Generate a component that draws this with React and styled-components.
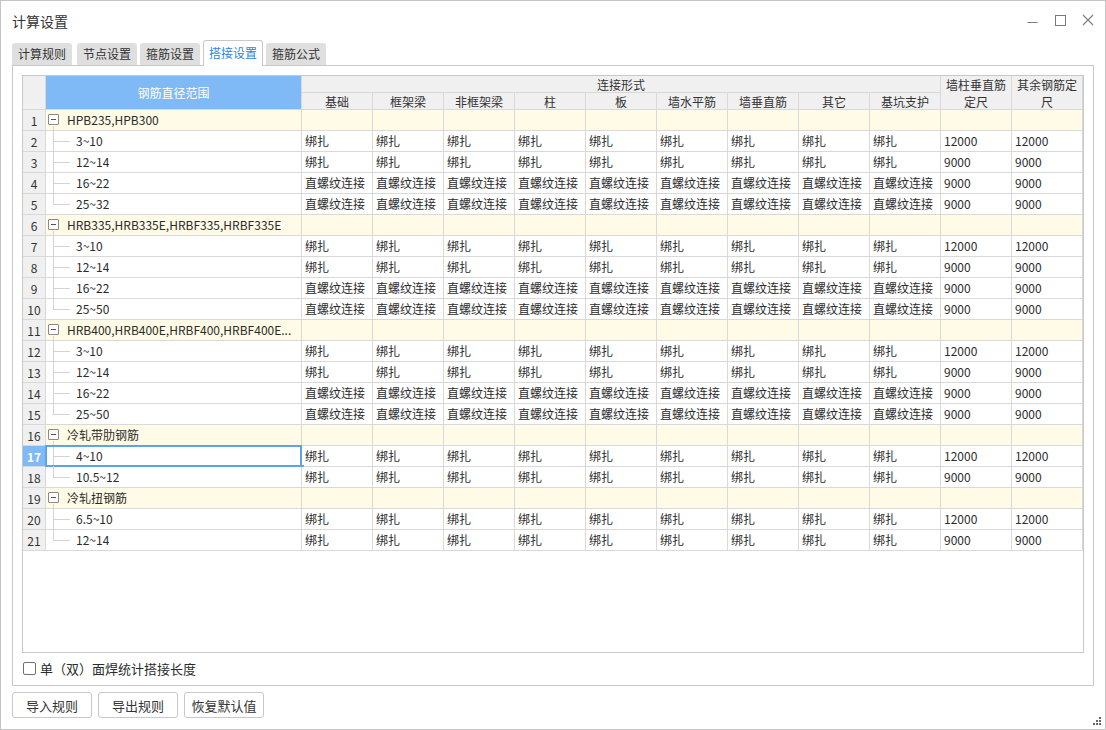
import React, { useState } from 'react';
import styled, { createGlobalStyle, css } from 'styled-components';

const GlobalStyle = createGlobalStyle`
    * {
        box-sizing: border-box;
    }
    body {
        margin: 0;
        background: #ffffff;
        font-family: 'Noto Sans CJK SC', 'Microsoft YaHei', sans-serif;
        color: #2b2b2b;
    }
`;

const LINE = '#d9d9d9';
const BLUE = '#7fb9f6';

const Window = styled.div`
    position: relative;
    width: 1106px;
    height: 730px;
    border: 1px solid #c4c4c4;
    background: #fff;
    display: flex;
    flex-direction: column;
`;

const TitleBar = styled.div`
    height: 39px;
    display: flex;
    align-items: center;
    padding: 0 3px 0 11px;
`;

const Title = styled.div`
    font-size: 14px;
    line-height: 18px;
    color: #333;
`;

const Controls = styled.div`
    margin-left: auto;
    display: flex;
    align-self: stretch;
`;

const ControlButton = styled.div`
    width: 28px;
    display: flex;
    align-items: center;
    justify-content: center;
    padding-bottom: 1px;
`;

const TabBar = styled.div`
    height: 25px;
    display: flex;
    align-items: flex-end;
    gap: 3px;
    padding-left: 11px;
    position: relative;
    z-index: 1;
`;

const Tab = styled.div`
    width: 60px;
    height: 22px;
    display: flex;
    align-items: center;
    justify-content: center;
    font-size: 12px;
    line-height: 16px;
    color: #333;
    background: #dfdfdf;
    border-radius: 3px 3px 0 0;
    &:first-child {
        margin-right: 2px;
    }
    ${(p) =>
        p.active &&
        css`
            height: 26px;
            margin-bottom: -1px;
            background: #fff;
            color: #2a86e0;
            border: 1px solid #c8c8c8;
            border-bottom: none;
            padding-bottom: 2px;
        `}
`;

const Panel = styled.div`
    margin: 0 11px;
    height: 621px;
    border: 1px solid #c8c8c8;
    padding: 9px 8px 0 9px;
    display: flex;
    flex-direction: column;
`;

const Grid = styled.div`
    width: 1062px;
    height: 578px;
    border: 1px solid #c8c8c8;
    overflow: hidden;
    background: #fff;
`;

const HeaderGrid = styled.div`
    display: grid;
    grid-template-columns: 23px 256px repeat(11, 71px);
    grid-template-rows: 17px 17px;
    background: #f0f0f0;
`;

const HeadCell = styled.div`
    display: flex;
    align-items: center;
    justify-content: center;
    text-align: center;
    font-size: 12px;
    line-height: 17px;
    color: #333;
    padding: 0 2px;
    border-right: 1px solid ${LINE};
    border-bottom: 1px solid ${LINE};
    grid-column: ${(p) => p.col || 'auto'};
    grid-row: ${(p) => p.row || 'auto'};
    background: ${(p) => (p.blue ? BLUE : '#f0f0f0')};
    color: ${(p) => (p.blue ? '#fff' : '#333')};
`;

const Row = styled.div`
    position: relative;
    display: grid;
    grid-template-columns: 23px 256px repeat(11, 71px);
    height: 21px;
    background: ${(p) => (p.group ? '#fffbe6' : '#fff')};
`;

const NumCell = styled.div`
    display: flex;
    align-items: center;
    justify-content: center;
    font-size: 12px;
    background: ${(p) => (p.selected ? BLUE : '#f0f0f0')};
    color: ${(p) => (p.selected ? '#fff' : '#333')};
    font-weight: ${(p) => (p.selected ? 700 : 400)};
    border-right: 1px solid ${LINE};
    border-bottom: 1px solid ${LINE};
`;

const Cell = styled.div`
    font-size: 12px;
    line-height: 20px;
    padding: 0 3px;
    white-space: nowrap;
    overflow: hidden;
    border-right: 1px solid ${LINE};
    border-bottom: 1px solid ${LINE};
`;

const NameCell = styled.div`
    position: relative;
    display: flex;
    align-items: center;
    font-size: 12px;
    line-height: 20px;
    padding-left: ${(p) => (p.child ? '30px' : '2px')};
    border-right: 1px solid ${LINE};
    border-bottom: 1px solid ${LINE};
`;

const NameText = styled.span`
    white-space: nowrap;
    overflow: hidden;
    text-overflow: ellipsis;
    max-width: 228px;
`;

const Toggle = styled.span`
    width: 11px;
    height: 11px;
    border: 1px solid #8a8a8a;
    border-radius: 1px;
    margin-right: 8px;
    margin-top: -1px;
    display: flex;
    align-items: center;
    justify-content: center;
    background: #fff;
    &::after {
        content: '';
        width: 5px;
        height: 1px;
        background: #555;
    }
`;

const TreeV = styled.span`
    position: absolute;
    left: 7px;
    width: 1px;
    background: #d4d4d4;
    top: ${(p) => p.top}px;
    bottom: ${(p) => p.bottom}px;
`;

const TreeH = styled.span`
    position: absolute;
    left: 7px;
    top: 10px;
    width: 17px;
    height: 1px;
    background: #d4d4d4;
`;

const Selection = styled.div`
    position: absolute;
    left: 22px;
    top: -1px;
    width: 257px;
    height: 22px;
    border: 2px solid #5fa2ec;
    pointer-events: none;
    &::after {
        content: '';
        position: absolute;
        right: -4px;
        bottom: -4px;
        width: 4px;
        height: 4px;
        background: #5fa2ec;
    }
`;

const CheckRow = styled.label`
    flex: 1;
    display: flex;
    align-items: center;
    padding-left: 1px;
    font-size: 13px;
    line-height: 18px;
    color: #2b2b2b;
    padding-bottom: 1px;
`;

const CheckBox = styled.span`
    width: 13px;
    height: 13px;
    border: 1px solid #6f6f6f;
    border-radius: 2px;
    background: #fff;
    margin-right: 4px;
`;

const ButtonRow = styled.div`
    display: flex;
    gap: 6px;
    padding: 6px 0 0 11px;
`;

const Button = styled.button`
    width: 80px;
    height: 26px;
    border: 1px solid #c8c8c8;
    border-radius: 3px;
    background: #fff;
    font-family: inherit;
    font-size: 13px;
    color: #333;
    padding: 0;
`;

const Grip = styled.svg`
    position: absolute;
    right: 3px;
    bottom: 3px;
`;

const COLS = ['基础', '框架梁', '非框架梁', '柱', '板', '墙水平筋', '墙垂直筋', '其它', '基坑支护'];

const small = (r) => [r, '绑扎', 12000];
const groups = [
    {
        name: 'HPB235,HPB300',
        items: [
            ['3~10', '绑扎', 12000],
            ['12~14', '绑扎', 9000],
            ['16~22', '直螺纹连接', 9000],
            ['25~32', '直螺纹连接', 9000],
        ],
    },
    {
        name: 'HRB335,HRB335E,HRBF335,HRBF335E',
        items: [
            ['3~10', '绑扎', 12000],
            ['12~14', '绑扎', 9000],
            ['16~22', '直螺纹连接', 9000],
            ['25~50', '直螺纹连接', 9000],
        ],
    },
    {
        name: 'HRB400,HRB400E,HRBF400,HRBF400E...',
        items: [
            ['3~10', '绑扎', 12000],
            ['12~14', '绑扎', 9000],
            ['16~22', '直螺纹连接', 9000],
            ['25~50', '直螺纹连接', 9000],
        ],
    },
    {
        name: '冷轧带肋钢筋',
        items: [small('4~10'), ['10.5~12', '绑扎', 9000]],
    },
    {
        name: '冷轧扭钢筋',
        items: [small('6.5~10'), ['12~14', '绑扎', 9000]],
    },
];

const buildRows = () => {
    const rows = [];
    groups.forEach((g) => {
        rows.push({ type: 'group', name: g.name });
        g.items.forEach((it, i) => {
            rows.push({ type: 'item', range: it[0], mode: it[1], len: it[2], last: i === g.items.length - 1 });
        });
    });
    return rows;
};

const TABS = ['计算规则', '节点设置', '箍筋设置', '搭接设置', '箍筋公式'];

const App = () => {
    const [selected, setSelected] = useState(17);
    const [checked, setChecked] = useState(false);
    const rows = buildRows();

    return (
        <>
            <GlobalStyle />
            <Window>
                <TitleBar>
                    <Title>计算设置</Title>
                    <Controls>
                        <ControlButton>
                            <svg width="11" height="11" viewBox="0 0 11 11">
                                <line x1="0.5" y1="7.5" x2="10.5" y2="7.5" stroke="#7a7a7a" />
                            </svg>
                        </ControlButton>
                        <ControlButton>
                            <svg width="11" height="11" viewBox="0 0 11 11">
                                <rect x="0.5" y="0.5" width="10" height="10" fill="none" stroke="#7a7a7a" />
                            </svg>
                        </ControlButton>
                        <ControlButton>
                            <svg width="12" height="12" viewBox="0 0 12 12">
                                <path d="M1 1L11 11M11 1L1 11" stroke="#7a7a7a" strokeWidth="1.1" />
                            </svg>
                        </ControlButton>
                    </Controls>
                </TitleBar>

                <TabBar>
                    {TABS.map((t) => (
                        <Tab key={t} active={t === '搭接设置'}>
                            {t}
                        </Tab>
                    ))}
                </TabBar>

                <Panel>
                    <Grid>
                        <HeaderGrid>
                            <HeadCell col="1" row="1 / 3" />
                            <HeadCell col="2" row="1 / 3" blue>
                                钢筋直径范围
                            </HeadCell>
                            <HeadCell col="3 / 12" row="1">
                                连接形式
                            </HeadCell>
                            {COLS.map((c, i) => (
                                <HeadCell key={c} col={`${i + 3}`} row="2">
                                    {c}
                                </HeadCell>
                            ))}
                            <HeadCell col="12" row="1 / 3">
                                墙柱垂直筋定尺
                            </HeadCell>
                            <HeadCell col="13" row="1 / 3">
                                其余钢筋定尺
                            </HeadCell>
                        </HeaderGrid>

                        {rows.map((r, idx) => {
                            const n = idx + 1;
                            if (r.type === 'group') {
                                return (
                                    <Row key={n} group>
                                        <NumCell>{n}</NumCell>
                                        <NameCell>
                                            <Toggle />
                                            <NameText>{r.name}</NameText>
                                            <TreeV top={16} bottom={-1} />
                                        </NameCell>
                                        {Array.from({ length: 11 }).map((_, i) => (
                                            <Cell key={i} />
                                        ))}
                                    </Row>
                                );
                            }
                            return (
                                <Row key={n} onClick={() => setSelected(n)}>
                                    <NumCell selected={selected === n}>{n}</NumCell>
                                    <NameCell child>
                                        <TreeV top={-1} bottom={r.last ? 10 : -1} />
                                        <TreeH />
                                        <NameText>{r.range}</NameText>
                                    </NameCell>
                                    {COLS.map((c) => (
                                        <Cell key={c}>{r.mode}</Cell>
                                    ))}
                                    <Cell>{r.len}</Cell>
                                    <Cell>{r.len}</Cell>
                                    {selected === n && <Selection />}
                                </Row>
                            );
                        })}
                    </Grid>

                    <CheckRow onClick={() => setChecked(!checked)}>
                        <CheckBox />
                        单（双）面焊统计搭接长度
                    </CheckRow>
                </Panel>

                <ButtonRow>
                    <Button>导入规则</Button>
                    <Button>导出规则</Button>
                    <Button>恢复默认值</Button>
                </ButtonRow>

                <Grip width="10" height="10" viewBox="0 0 10 10">
                    <rect x="7" y="1" width="2" height="2" fill="#666" />
                    <rect x="4" y="4" width="2" height="2" fill="#666" />
                    <rect x="7" y="4" width="2" height="2" fill="#666" />
                    <rect x="1" y="7" width="2" height="2" fill="#666" />
                    <rect x="4" y="7" width="2" height="2" fill="#666" />
                    <rect x="7" y="7" width="2" height="2" fill="#666" />
                </Grip>
            </Window>
        </>
    );
};

export default App;
